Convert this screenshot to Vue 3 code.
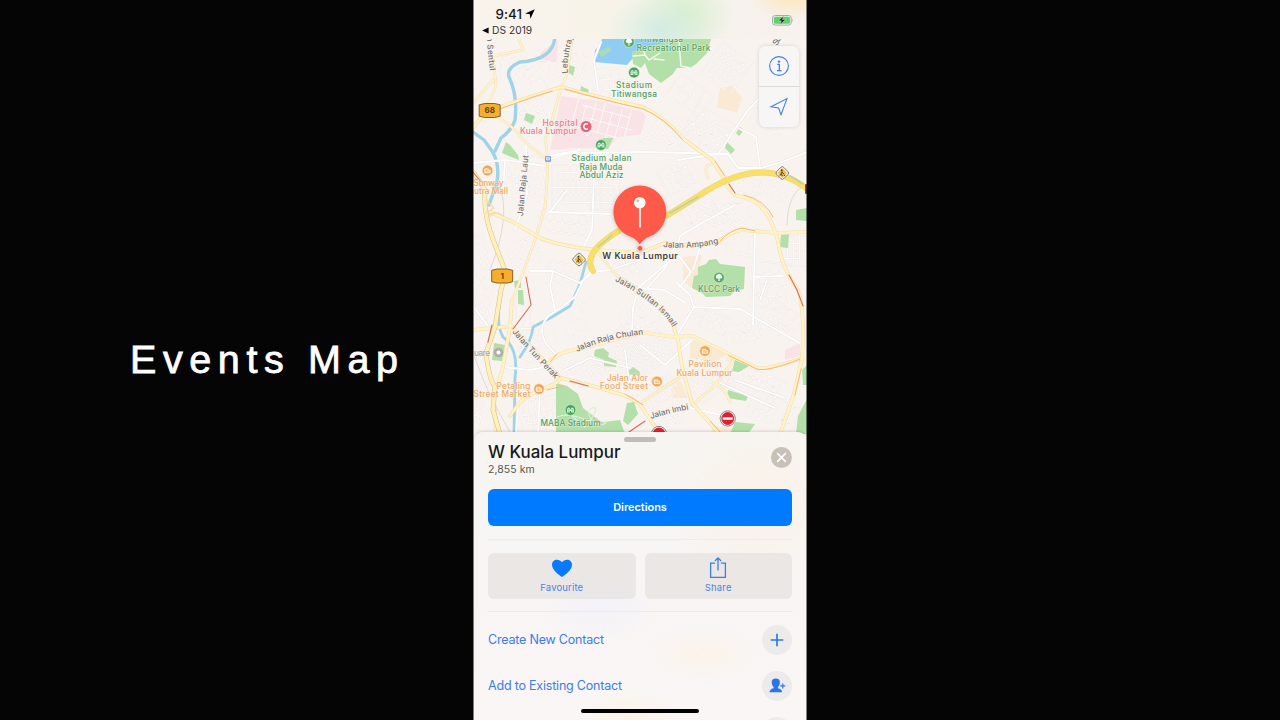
<script setup>
const major = [
  'M473 128L483 115Q500 106 533 96L561 87Q600 98 643 107Q665 118 685 140L712 160L725 180Q730 194 738 196Q757 199 766 213Q776 228 779 247Q783 270 798 290Q805 310 802 360L793 397L780 434',
  'M512 300L510 327L503 367L494 398L496 434',
  'M596 250Q560 246 540 238L513 222L490 212',
  'M673 325L678 340L682 367L692 403L720 434',
  'M596 250L640 253L665 243Q690 248 718 242Q730 232 742 230L777 233L807 232',
  'M473 330L512 326M561 378L596 387L623 395Q640 401 645 412L660 434',
  'M549 363Q556 352 580 349M640 332L673 337L693 336L727 353L757 368Q767 370 803 358',
  'M561 378Q555 386 540 389L520 402L510 416'
]
const mid = [
  'M483 115L496 86L493 56L523 50L519 39',
  'M493 115Q510 122 526 143L545 158',
  'M561 88Q556 105 553 117L545 140Q550 158 545 207L536 237L523 273L512 300',
  'M580 349L643 333M512 326L561 378',
  'M473 103L493 80M561 87L567 74L572 39',
  'M596 250L616 275L650 297Q668 312 673 325',
  'M735 358L718 382L693 405M680 377L642 402',
  'M708 178Q702 165 712 164',
  'M713 383Q726 388 730 402M727 360L735 357'
]
const local = [
  'M551 159L570 153L645 152L728 154L738 168L762 168L782 162L807 152',
  'M598 90L594 60L601 42M561 88L590 95',
  'M678 160L718 154L748 110L772 85M740 129L756 137L760 168',
  'M473 163L505 160L545 166M545 157L580 150',
  'M594 175L592 230L582 250M567 190L550 212M548 212L610 214',
  'M643 293L665 268L676 250L680 236L700 224L735 205M676 252L691 272L680 287',
  'M693 270L700 247M755 233L753 325M753 277L783 276',
  'M677 335L694 307L690 295L676 282M694 307L740 309L803 345M686 303L664 290L638 288L633 308L632 330',
  'M592 271L584 279L575 297L556 311Q542 318 542 332Q544 347 560 356M555 310L550 286L553 271L530 271M553 271L580 283L592 273',
  'M503 367L530 370L550 366M520 385L516 434M540 389L538 434M473 306L488 326',
  'M640 345L665 365L692 340M625 350L630 390',
  'M735 380L785 398M718 382L775 408',
  'M608 250L612 270M565 370L590 358L630 368',
  'M526 143L527 195L515 230M505 160L503 192M638 288L665 265',
  'M592 272L610 270L640 260M690 408L730 417M760 300L767 280'
]
const patches = [
  [525, 71, 49, 25, 7, 8], [570, 68, 28, 28, 12, 7], [537, 116, 30, 38, -18, 6],
  [604, 120, 60, 40, 15, 9], [666, 132, 46, 32, 15, 7], [616, 84, 43, 28, 3, 8],
  [727, 68, 37, 38, 35, 6], [708, 132, 44, 38, 28, 5], [765, 120, 40, 26, 31, 7],
  [690, 95, 40, 25, 35, 10], [527, 178, 38, 45, 7, 6], [577, 185, 50, 40, 0, 6], [566, 224, 55, 22, 7, 8],
  [605, 195, 30, 30, 0, 6], [525, 254, 30, 27, -17, 7], [565, 275, 35, 22, 8, 8], [626, 270, 35, 24, -25, 7],
  [700, 208, 40, 34, -27, 7], [680, 176, 37, 28, -30, 7], [734, 245, 34, 22, 7, 8], [725, 215, 50, 20, -10, 7],
  [770, 188, 35, 18, 18, 7], [794, 251, 25, 30, 0, 6], [770, 285, 38, 45, 5, 9], [745, 186, 30, 16, 10, 6],
  [572, 322, 40, 30, -18, 11], [618, 354, 50, 40, -34, 5], [650, 350, 44, 40, -34, 5],
  [708, 320, 40, 18, 22, 7], [743, 334, 35, 22, -10, 7], [781, 320, 36, 28, 32, 6],
  [706, 378, 35, 38, -34, 5], [753, 385, 62, 30, 23, 7], [773, 412, 50, 28, 24, 7],
  [670, 418, 29, 25, -18, 5], [660, 392, 36, 20, -34, 5], [582, 375, 42, 22, 13, 6],
  [530, 348, 18, 36, 21, 6], [538, 412, 30, 36, 4, 6], [478, 401, 12, 60, 12, 6],
  [484, 300, 16, 43, 12, 7], [524, 315, 16, 43, 0, 7], [480, 255, 16, 40, -12, 7], [640, 317, 40, 20, -10, 8]
].map(([x, y, w, h, a, s]) => {
  let d = ''
  for (let u = -w / 2, i = 0; u <= w / 2; u += s, i++) {
    const cut = (i * 5) % 3 * h / 8
    d += `M${u} ${-h / 2 + cut}V${h / 2 - (i % 2) * 5}`
  }
  for (let v = -h / 2, i = 0; v <= h / 2; v += s * 1.25, i++) {
    d += `M${-w / 2 + (i % 3) * 5} ${v}H${w / 2 - (i % 2) * 7}`
  }
  return { d, t: `translate(${x} ${y}) rotate(${a})` }
})
const greens = [
  'M632 52L645 47L668 42L672 39H711L707 53L696 64L690 68H677L673 74L661 83L649 74L645 63L641 68L633 64Z',
  'M698 267L706 264L709 260L716 259L720 264L745 267L744 289L735 291L730 296L706 297L702 293L692 288L694 276L698 275Z',
  'M556 383L567 386L578 394L583 408L600 421L618 428V434H556Z',
  'M569 65L575 67L573 76L567 71ZM581 86L589 90L587 96L580 93ZM526 113L535 116L532 124L524 120Z',
  'M506 142L510 145L518 155L519 160L511 157L502 153ZM727 142L735 150L731 154L725 148Z',
  'M796 210L807 208V221L796 220ZM781 235L789 234L788 248L780 247ZM740 127L744 130L739 136L736 133Z',
  'M518 290L523 290L524 305L518 304ZM494 343L505 345L502 361L492 360ZM514 281L521 280V288H515Z',
  'M595 350L603 348L609 353L608 357L617 361L616 367L604 366L604 360L594 356ZM628 371L633 367L640 372V376L628 374Z',
  'M735 360L749 366L739 372L732 371ZM728 390L748 396L746 401L727 398Z',
  'M627 403L634 402L638 414L628 425L623 421ZM604 422L620 420L625 434H600Z',
  'M735 422L755 424L748 434H730ZM807 399L798 416L796 434H807ZM802 370L807 365V385H803ZM603 138H613L608 149L598 148Z'
]
const labels = [
  ['Stadium', 634, 88.2, 36, 'g'], ['Titiwangsa', 634, 97, 46, 'g'],
  ['Recreational Park', 673.5, 50.5, 74, 'g'], ['Titiwangsa', 661, 42, 44, 'g'],
  ['Hospital', 560, 125.8, 35, 'p'], ['Kuala Lumpur', 548.5, 134, 57, 'p'],
  ['Stadium Jalan', 601.5, 160.5, 60, 'g'], ['Raja Muda', 601, 169.5, 43, 'g'], ['Abdul Aziz', 601.5, 178.3, 44, 'g'],
  ['Sunway', 488.5, 185.7, 30, 'o'], ['utra Mall', 491, 194.3, 34, 'o'],
  ['KLCC Park', 719, 292.3, 42, 'g'],
  ['Pavilion', 705, 366.7, 33, 'o'], ['Kuala Lumpur', 704.5, 375.5, 56, 'o'],
  ['Jalan Alor', 627.5, 380.5, 41, 'o'], ['Food Street', 624, 389.3, 48, 'o'],
  ['Petaling', 513.5, 388.5, 34, 'o'], ['Street Market', 502, 397.2, 57, 'o'],
  ['MABA Stadium', 570.5, 426.2, 60, 'g'], ['uare', 482, 355.5, 16, 's']
]
const roads = [
  { id: 'sentul', d: 'M487 37Q487 50 490.5 74', text: 'n Sentul', len: 34 },
  { id: 'lebuh', d: 'M568 73Q566 60 573 36', text: 'Lebuhraj', len: 36 },
  { id: 'laut', d: 'M523 216Q525 190 529 151', text: 'Jalan Raja Laut', len: 61 },
  { id: 'ampang', d: 'M663 247Q692 250 721 242.5', text: 'Jalan Ampang', len: 56 },
  { id: 'ismail', d: 'M615 281Q628 287 645 299Q664 312 674 329', text: 'Jalan Sultan Ismail', len: 75 },
  { id: 'chulan', d: 'M577 352Q606 338 647 334', text: 'Jalan Raja Chulan', len: 69 },
  { id: 'perak', d: 'M512 332Q529 352 556 380', text: 'Jalan Tun Perak', len: 64 },
  { id: 'imbi', d: 'M651 419Q669 413 691 409', text: 'Jalan Imbi', len: 39 },
  { id: 'corner', d: 'M777 46L784 34', text: 'Su', len: 9 }
]
</script>

<template>
  <main class="stage">
    <h1 class="title">Events Map</h1>
    <section class="phone">
      <svg class="map" viewBox="473 0 334 440" width="334" height="440">
        <rect x="473" width="334" height="440" fill="#f8f3ef" />
        <path d="M561 96L600 101L643 112L647 118L640 135L617 137L608 149L580 148L550 150ZM541 52L558 40L557 62L540 62ZM785 350L800 343V356L785 360Z" fill="#fae3e6" />
        <path d="M683 257L702 255L698 275L692 288L683 281ZM720 88L732 86L742 98L737 113L717 107ZM690 338L727 354L715 362L690 358ZM670 385L680 380L688 398L673 398ZM712 426L735 428L730 440H711Z" fill="#faead4" />
        <path d="M602 38L600 46L595 50L594 62L627 65L634 57L640 52L668 43V38Z" fill="#90cdf2" />
        <g v-for="p in patches" :key="p.t" :transform="p.t" class="lines">
          <path :d="p.d" stroke="#e9e2e0" stroke-width="1.4" />
          <path :d="p.d" stroke="#fdfaf9" stroke-width=".9" />
        </g>
        <path v-for="g in greens" :key="g" :d="g" fill="#b3dfa8" />
        <path d="M598 52L609 47L612 50L602 57Z" fill="#a9dcb9" />
        <g class="lines">
          <path d="M555 38Q553 50 545 55Q536 61 520 62Q506 68 509 77Q518 96 515 120Q512 130 501 138L495 151M473 132L484 140L492 151Q500 164 497 182L489 205" stroke="#9fd3e7" stroke-width="3.4" />
          <path d="M586 262L580 284L570 306L552 317L533 327Q532 340 520 357M500 300Q496 325 503 337Q519 349 515 378L514 434" stroke="#9fd3e7" stroke-width="2.8" />
          <path d="M499 185Q512 215 490 270M807 185Q788 190 787 225M473 352Q485 390 510 432" stroke="#ddd7d5" stroke-width=".9" />
          <path d="M557 417Q568 412 586 420T606 422M592 420Q585 410 592 408T592 418L588 424M572 416L585 427" stroke="#dcefd4" stroke-width="1.2" />
          <path v-for="d in local" :key="d" :d="d" stroke="#e6e1df" stroke-width="2.5" />
          <path v-for="d in local" :key="d + 'w'" :d="d" stroke="#fff" stroke-width="1.8" />
          <path d="M633 56L645 55L649 60L660 53M645 55L643 48M654 59L664 60M679 39L680 55L681 66L690 68" stroke="#f7fbf2" stroke-width="1.4" />
          <path v-for="d in mid" :key="d" :d="d" stroke="#f2dcb3" stroke-width="2.7" />
          <path v-for="d in mid" :key="d + 'w'" :d="d" stroke="#fdf2cc" stroke-width="2" />
          <path v-for="d in major" :key="d" :d="d" stroke="#efd7a5" stroke-width="3.6" />
          <path v-for="d in major" :key="d + 'w'" :d="d" stroke="#fff3c5" stroke-width="2.8" />
          <path d="M474 173L485 190Q483 214 494 242L506 273L501 290L495 327L486 353Q489 379 495 387L493 410L500 434" stroke="#d8c392" stroke-width="4.8" />
          <path d="M474 173L485 190Q483 214 494 242L506 273L501 290L495 327L486 353Q489 379 495 387L493 410L500 434" stroke="#fff0b9" stroke-width="3.7" />
          <path d="M488 202L494 208L486 213M488 218Q494 209 503 216" stroke="#f8d9ac" stroke-width="1.4" />
          <path d="M483 115L533 97L552 91M565 89Q600 99 643 109Q665 118 682 139M715 161L725 176M744 195Q765 200 773 217M720 241Q730 230 742 228L755 231M550 362L557 354M728 355L757 369Q767 372 800 359M801 369L795 395M560 377L556 374M625 394L643 405M563 386L547 390M710 421L720 432" stroke="#f6ba72" stroke-width="1" />
          <path d="M729 184L735 193M789 275L797 290M526 277L531 305L513 329M570 381L588 386M488 342L492 325M629 432L645 421M473 172L481 182M797 290L803 306" stroke="#d66b5c" stroke-width="1.1" />
          <path d="M593 271Q584 258 603 242Q622 226 640 222L668 215L700 195Q730 175 754 173Q783 170 807 189" stroke="#efd45e" stroke-width="6" />
          <path d="M593 271Q584 258 603 242Q622 226 640 222L668 215L700 195Q730 175 754 173Q783 170 807 189" stroke="#f8df6c" stroke-width="5" />
          <path d="M670 213L698 197M598 247L612 235M790 176L803 184" stroke="#bdd0aa" stroke-width="1.5" />
        </g>
        <defs><path v-for="r in roads" :id="r.id" :key="r.id" :d="r.d" /></defs>
        <text v-for="r in roads" :key="r.id" class="label n"><textPath :href="'#' + r.id" :textLength="r.len">{{ r.text }}</textPath></text>
        <text v-for="l in labels" :key="l[0] + l[1]" class="label" :class="l[4]" :x="l[1] - l[3] / 2" :y="l[2]" :textLength="l[3]">{{ l[0] }}</text>

        <g v-for="p in [[629, 42], [719, 277.5]]" :key="p[0]" :transform="`translate(${p[0]} ${p[1]})`">
          <circle r="5.4" fill="#58ae68" stroke="#d5efce" stroke-width=".7" /><path d="M-.6 3.4V1H-2.2Q-4-.2-2.7-1.7Q-2.5-3.6 0-3.5Q2.5-3.6 2.7-1.7Q4-.2 2.2 1H.6V3.4Z" fill="#fff" />
        </g>
        <g v-for="p in [[634, 72.5], [601, 145], [570.5, 410]]" :key="p[0]" :transform="`translate(${p[0]} ${p[1]})`">
          <circle r="5.4" fill="#44a55e" stroke="#d5efce" stroke-width=".7" />
          <path d="M-3.5 0Q-3.4-2.7-1.8-2.6L-.6-2V-.8H.6V-2L1.8-2.6Q3.4-2.7 3.5 0V2.4H.7V1H-.7V2.4H-3.5Z" fill="#d9f0d8" /><path d="M-2.6-.6H-1M1-.6H2.6M-2.6 1H-1.4M1.4 1H2.6" stroke="#44a55e" stroke-width=".6" />
        </g>
        <g v-for="p in [[487.5, 170.5], [705, 351], [657, 381.5], [539, 389]]" :key="p[0]" :transform="`translate(${p[0]} ${p[1]})`">
          <circle r="5.4" fill="#f0a653" stroke="#fff2df" stroke-width=".7" /><path d="M-2.7-1.7H.8V-.3H2.7V2.2H-2.7Z" fill="#f8c78d" stroke="#fff" stroke-width=".8" stroke-linejoin="round" />
        </g>
        <circle cx="586" cy="126.5" r="5.5" fill="#e2637a" /><path d="M588 124.3A2.7 2.7 0 1 0 588 128.7" fill="none" stroke="#fff" stroke-width="1.4" />
        <circle cx="498.5" cy="352.5" r="4.8" fill="#b1aeac" /><circle cx="498.5" cy="352.5" r="2" fill="#fff" />
        <rect x="545" y="156" width="6" height="6" rx="1.2" fill="#7ba4e0" /><path d="M546.6 157.4H549.4V160H546.6ZM546.6 158.9H549.4" fill="none" stroke="#fff" stroke-width=".7" />
        <g v-for="s in [[489.7, 110.5, '68'], [502.2, 276, '1']]" :key="s[2]" :transform="`translate(${s[0]} ${s[1]})`">
          <path d="M-10.5-5.7L-5-7H5L10.5-5.7V5.7L5 7H-5L-10.5 5.7Z" fill="#f7ae2b" stroke="#80602c" stroke-width="1" stroke-linejoin="round" />
          <text class="shield" y="2.9">{{ s[2] }}</text>
        </g>
        <g v-for="p in [[579, 259.5], [782.3, 173]]" :key="p[0]" :transform="`translate(${p[0]} ${p[1]})`">
          <rect x="-5" y="-5" width="10" height="10" rx="2" transform="rotate(45)" fill="#fbf5e8" stroke="#77716a" stroke-width=".9" />
          <rect x="-3.5" y="-3.5" width="7" height="7" rx=".8" transform="rotate(45)" fill="#f3bb4c" />
          <circle cx="-.6" cy="-2.8" r=".9" fill="#443720" /><path d="M-.3-1.6L-1 .7L.1 3M-1 .7L-2.4 2.8M-.4-1L1.9 1.2M1.6 2.5H2.8" fill="none" stroke="#443720" stroke-width=".9" />
        </g>
        <rect x="805" y="184" width="4" height="10" rx="1" fill="#76492e" />
        <g v-for="p in [[727.7, 418.5], [659, 434]]" :key="p[0]">
          <circle :cx="p[0]" :cy="p[1]" r="7.6" fill="#fff" stroke="#777" stroke-width=".9" /><circle :cx="p[0]" :cy="p[1]" r="6.4" fill="#e1202f" /><rect :x="p[0] - 5" :y="p[1] - 1.2" width="10" height="2.4" fill="#fff" />
        </g>
        <g class="pin">
          <path d="M639.8 185.5A26.4 26.4 0 0 0 613.4 212A26.4 26.4 0 0 0 631 237Q636 238.7 639.8 244.5Q643.6 238.7 648.6 237A26.4 26.4 0 0 0 666.2 212A26.4 26.4 0 0 0 639.8 185.5Z" fill="#fd5a49" />
          <circle cx="640" cy="248.2" r="2.8" fill="#f25e50" stroke="#fff3ed" stroke-width=".6" />
          <path d="M640 207V226.8" stroke="#f7dfdc" stroke-width="2.1" stroke-linecap="round" /><circle cx="639.8" cy="202.7" r="5.8" fill="#fff" /><circle cx="637.8" cy="200.8" r="1.2" fill="#f7a49a" />
        </g>
        <text class="pin-label" x="602.3" y="259.3" textLength="75.5">W Kuala Lumpur</text>
      </svg>

      <header class="status">
        <div class="clock">9:41
          <svg width="10" height="10" viewBox="0 0 9 9"><path d="M8.8.2L4.9 8.8L4.3 4.7L.2 4.1Z" /></svg>
        </div>
        <div class="back"><svg width="7" height="7" viewBox="0 0 7 7"><path d="M.2 3.5L6.6.4V6.6Z" /></svg>DS 2019</div>
        <svg class="battery" width="22" height="11" viewBox="0 0 22 11">
          <rect x=".5" y=".5" width="18.8" height="9.6" rx="2.8" fill="#f1f3ec" stroke="#a7aaa4" /><rect x="1.8" y="1.8" width="16.2" height="7" rx="1.6" fill="#5ad56c" />
          <path d="M20.3 3.6Q21.6 5.3 20.3 7Z" fill="#999" /><path d="M11.7.9L6.4 5.8H9.4L8 9.7L13.5 4.6H10.5Z" fill="#222" stroke="#dff4df" stroke-width=".4" />
        </svg>
      </header>

      <div class="controls">
        <button><svg width="22" height="22" viewBox="0 0 22 22" fill="none" stroke="#3f7fe8"><circle cx="11" cy="11" r="9.4" stroke-width="1.1" /><circle cx="11" cy="6.6" r="1.2" fill="#3f7fe8" stroke="none" /><path d="M9.2 9.4H11.3V15.5M8.9 15.6H13.6" stroke-width="1.3" /></svg></button>
        <button><svg width="22" height="22" viewBox="0 0 22 22" fill="none" stroke="#3f7fe8" stroke-width="1.1"><path d="M19 2.6L13 18.6L10.6 12L3 10.7Z" stroke-linejoin="miter" /></svg></button>
      </div>

      <article class="sheet">
        <i class="grabber"></i>
        <header class="place">
          <div><h2>W Kuala Lumpur</h2><p>2,855 km</p></div>
          <button class="close"><svg width="21" height="21" viewBox="0 0 21 21"><path d="M6.7 6.7L14.3 14.3M14.3 6.7L6.7 14.3" stroke="#fff" stroke-width="1.7" stroke-linecap="round" /></svg></button>
        </header>
        <button class="directions"><span>Directions</span></button>
        <div class="actions">
          <button><svg width="22" height="22" viewBox="0 0 22 22"><path d="M11 20C8.2 18 1 13.2 1 7.7C1 4.8 3.1 2.7 5.8 2.7C8.1 2.7 10 3.5 11 5.3C12 3.5 13.9 2.7 16.2 2.7C18.9 2.7 21 4.8 21 7.7C21 13.2 13.8 18 11 20Z" fill="#087aff" /></svg><span>Favourite</span></button>
          <button><svg width="22" height="22" viewBox="0 0 22 22" fill="none" stroke="#3e7de5" stroke-width="1.3"><path d="M8 6.2H3.6V20.4H18.4V6.2H14M11 13.5V1M7.9 4L11 .9L14.1 4" /></svg><span>Share</span></button>
        </div>
        <ul class="contacts">
          <li><span>Create New Contact</span><i><svg width="30" height="30" viewBox="0 0 30 30"><path d="M15 8.7V21.3M8.7 15H21.3" stroke="#3177e6" stroke-width="1.7" /></svg></i></li>
          <li><span>Add to Existing Contact</span><i><svg width="30" height="30" viewBox="0 0 30 30" fill="#2b76e6"><path d="M13.8 7.6Q18 7.6 17.9 11.8Q17.8 14.5 16 16.2V17.3Q19.9 18.2 20.1 21.2H7.5Q7.7 18.2 11.6 17.3V16.2Q9.8 14.5 9.7 11.8Q9.6 7.6 13.8 7.6Z" /><path d="M20.8 12.4V17.4M18.3 14.9H23.3" stroke="#2b76e6" stroke-width="1.2" /></svg></i></li>
          <li><span></span><i></i></li>
        </ul>
        <i class="home"></i>
      </article>
    </section>
  </main>
</template>

<style>
body { margin: 0; background: #050505; }
</style>
<style scoped>
* { box-sizing: border-box; }
.stage { width: 1280px; height: 720px; overflow: hidden; background: #050505; display: grid; grid-template-columns: 473px 334px; font-family: Inter, "Liberation Sans", sans-serif; }
.title { margin: 0; padding: 336px 0 0 130px; color: #fff; font: 400 39.5px/46px "Liberation Sans", sans-serif; letter-spacing: 6.6px; white-space: nowrap; -webkit-text-stroke: .8px #fff; }
.phone { position: relative; height: 720px; overflow: hidden; background: #f8f5f3; display: flex; flex-direction: column; justify-content: flex-end; }
.phone::after { content: ""; position: absolute; inset: 0; border: solid #0007; border-width: 0 .5px 0 1px; pointer-events: none; }
.map { position: absolute; left: 0; top: 0; }
.lines { fill: none; stroke-linecap: round; stroke-linejoin: round; }
.label { font: 500 8.3px Inter, sans-serif; paint-order: stroke; stroke: #fbf7f299; stroke-width: 1.2px; stroke-linejoin: round; }
.g { fill: #51a063; }
.p { fill: #e4808f; }
.o { fill: #ebaa66; }
.n { fill: #77716f; }
.s { fill: #a8a3a1; }
.label.n { font-size: 8.1px; }
.shield { font: 700 8px Inter, sans-serif; text-anchor: middle; fill: #55401c; }
.pin { filter: drop-shadow(0 1px 2px #0003); }
.pin-label { font: 600 8.8px Inter, sans-serif; fill: #464140; paint-order: stroke; stroke: #fbf7f2; stroke-width: 1.5px; }
.status { position: absolute; inset: 0 0 auto; height: 39px; background: radial-gradient(ellipse 55px 36px at 188px 30px, #d3ebe4 0, #d8eee088 50%, transparent), radial-gradient(ellipse 50px 44px at 210px 15px, #d7efcc, transparent), radial-gradient(ellipse 45px 20px at 320px 0, #fbe9c0, transparent), linear-gradient(90deg, #f8f3ec, #f7f3e9 45%, #f6f2ec 70%, #f8f1ef); color: #171717; }
.clock { position: absolute; left: 22.5px; top: 6px; font: 500 13.3px/16px Inter, sans-serif; display: flex; align-items: center; gap: 3px; letter-spacing: .1px; }
.back { position: absolute; left: 9px; top: 24px; font: 400 10.2px/13px Inter, sans-serif; display: flex; align-items: center; gap: 3px; letter-spacing: .05px; color: #333; }
.battery { position: absolute; left: 299px; top: 15px; }
.controls { position: absolute; left: 286.3px; top: 45.5px; width: 39.5px; height: 81px; border-radius: 7px; background: #f8f6f5f5; box-shadow: 0 0 4px #0002; display: flex; flex-direction: column; }
button { border: 0; padding: 0; font-family: inherit; }
.controls button { flex: 1; background: none; display: grid; place-items: center; }
.controls button + button { border-top: 1px solid #dedcdb; }
.sheet { position: relative; height: 288.5px; margin-left: 1px; border-radius: 9px 9px 0 0; padding: 0 15px 0 14px; background: radial-gradient(ellipse 90px 80px at 280px 70px, #fbf1e7, transparent), radial-gradient(ellipse 60px 35px at 125px 175px, #f3f2f9, transparent), radial-gradient(ellipse 60px 30px at 230px 222px, #fcf3ea, transparent), radial-gradient(ellipse 50px 30px at 155px 286px, #fcf3e4, transparent), linear-gradient(#f7f5f2, #f8f5f4 60%, #f9f6f5); box-shadow: 0 -1px 3px #0002; overflow: hidden; }
.grabber { position: absolute; left: 150px; top: 5.5px; width: 32px; height: 4.5px; border-radius: 3px; background: #bfbdb9; }
.place { height: 57.5px; display: flex; justify-content: space-between; padding-top: 10px; }
h2 { margin: 0; font-size: 16.9px; line-height: 21px; font-weight: 500; letter-spacing: 0; color: #191919; white-space: nowrap; }
p { margin: 0; font-size: 10.5px; line-height: 13px; color: #555; letter-spacing: .05px; }
.close { width: 21px; height: 21px; margin-top: 5.5px; border-radius: 50%; background: #c8c1b8; }
.close svg { display: block; }
.directions { display: block; width: 304px; height: 36.5px; border-radius: 6px; background: #007aff; color: #fff; font-size: 10.9px; font-weight: 600; }
.actions { margin-top: 13.5px; border: solid #eeebe9; border-width: 1px 0; padding: 13px 0 12px; height: 73px; display: grid; grid-template-columns: 1fr 1fr; gap: 9px; }
.actions button { border-radius: 6px; background: #dedad880; color: #4b84df; display: flex; flex-direction: column; align-items: center; padding-top: 4px; font-size: 9.5px; line-height: 12px; gap: 3px; }
.actions span { letter-spacing: .15px; }
.actions svg { flex: none; }
.contacts { margin: 0; padding: 12.5px 0 0; list-style: none; }
.contacts li { height: 46px; display: flex; align-items: flex-start; justify-content: space-between; color: #3b7de4; font-size: 12.5px; letter-spacing: -.2px; line-height: 30px; }
.contacts i { width: 30px; height: 30px; border-radius: 50%; background: #edeaea; }
.contacts svg { display: block; }
.home { position: absolute; left: 107px; bottom: 7px; width: 118px; height: 4px; border-radius: 2px; background: #000; }
</style>
